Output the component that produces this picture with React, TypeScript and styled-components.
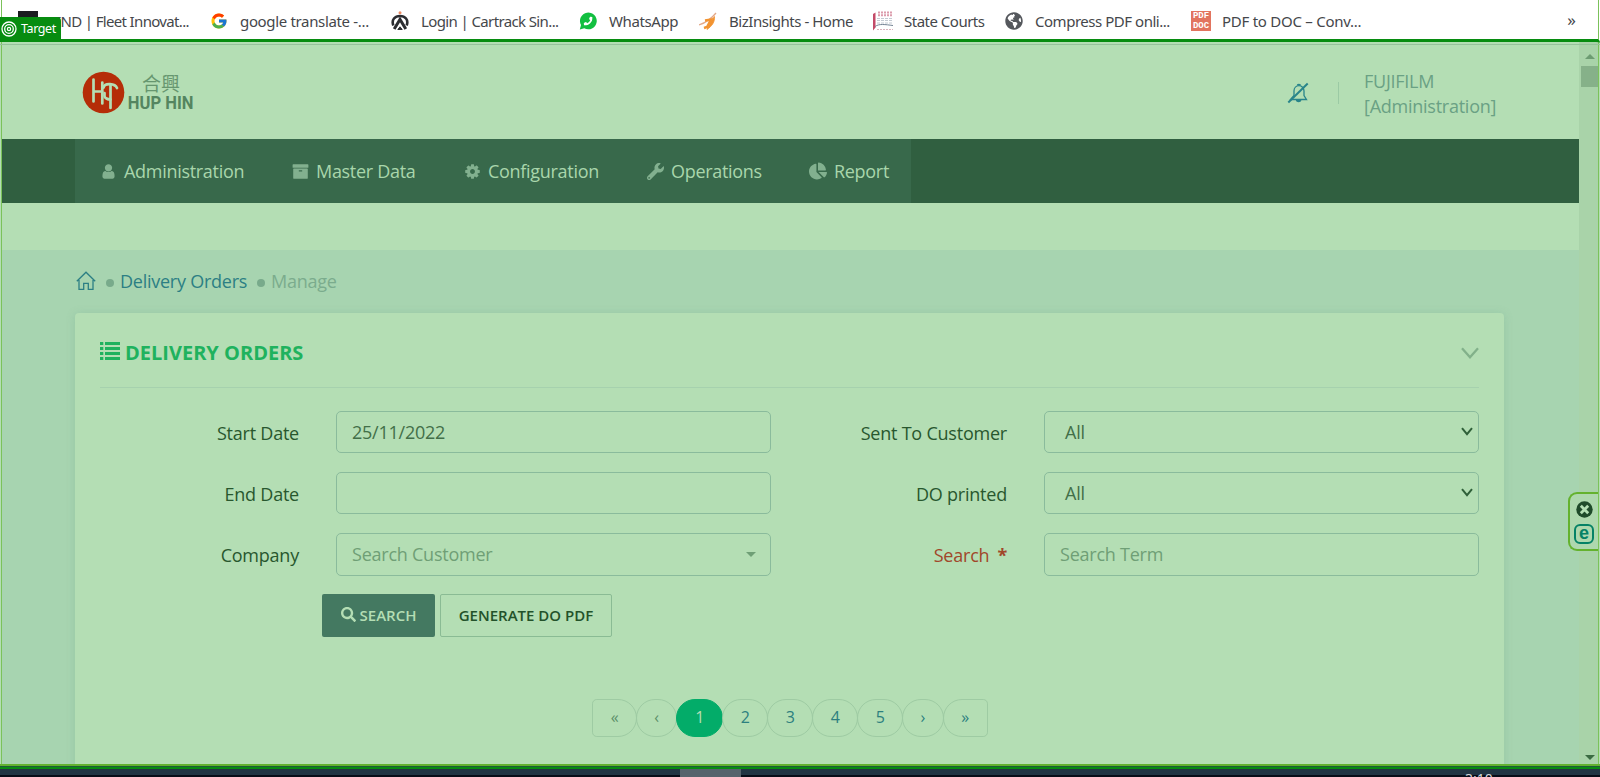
import React from "react";
import styled, { createGlobalStyle, css } from "styled-components";
import { FcGoogle } from "react-icons/fc";
import { FaWrench, FaChartPie, FaSearch, FaPhoneAlt, FaGlobeAmericas } from "react-icons/fa";

const GlobalStyle = createGlobalStyle`
  *, *::before, *::after { box-sizing: border-box; }
  body { margin: 0; background: #fff; }
`;

const uiFont = `"Noto Sans", "Open Sans", sans-serif`;

const Screen = styled.div`
  position: relative;
  width: 1600px;
  height: 777px;
  overflow: hidden;
  display: flex;
  flex-direction: column;
  background: #fff;
  font-family: "Open Sans", sans-serif;
  font-size: 18px;
`;

/* Browser bookmarks */
const BookmarkBar = styled.div`
  display: flex;
  align-items: center;
  height: 39px;
  flex: none;
  padding: 3px 24px 0 18px;
  font-family: ${uiFont};
  font-size: 15px;
  color: #45474b;
`;
const Bookmark = styled.div<{ $w: number; $ls: number }>`
  display: flex;
  align-items: center;
  gap: 11px;
  flex: none;
  width: ${(p) => p.$w}px;
  white-space: nowrap;
  letter-spacing: ${(p) => p.$ls}px;
  svg { display: block; flex: none; }
`;
const BookmarkText = styled.span`
  padding-bottom: 1px;
`;
const IconBox = styled.span`
  display: flex;
  justify-content: center;
  flex: none;
  width: 20px;
`;
const Overflow = styled.span`
  margin-left: auto;
  font-size: 17px;
  line-height: 18px;
  padding-bottom: 3px;
`;
const BlackTile = styled.span`
  width: 20px;
  height: 20px;
  background: #1b1c20;
`;
const PdfTile = styled.span`
  display: flex;
  flex-direction: column;
  align-items: center;
  width: 20px;
  height: 20px;
  background: #e2745f;
  color: #fff;
  font: bold 9px/10px "Liberation Mono", monospace;
  letter-spacing: 0;
`;

/* Captured window */
const Viewport = styled.div`
  display: flex;
  height: 727px;
  margin: 0 2px 0 2px;
  border-top: 3px solid #078c10;
  flex: none;
`;
const Page = styled.div`
  width: 1577px;
  display: flex;
  flex-direction: column;
  background: #a7d4b0;
  overflow: hidden;
`;
const Header = styled.header`
  display: flex;
  align-items: center;
  height: 97px;
  flex: none;
  padding: 4px 83px 0 80px;
  background: #b4deb4;
`;
const BrandText = styled.div`
  display: flex;
  flex-direction: column;
  align-items: center;
  width: 66px;
  margin-left: 3px;
`;
const BrandCjk = styled.span`
  font: 400 19px/20px "Noto Sans CJK TC", sans-serif;
  color: #66966f;
`;
const BrandLatin = styled.span`
  font: bold 18px/20px Roboto, sans-serif;
  white-space: nowrap;
  color: #548560;
  transform: scaleX(0.92);
`;
const HeaderTools = styled.div`
  display: flex;
  align-items: center;
  margin-left: auto;
`;
const ToolDivider = styled.span`
  width: 1px;
  height: 22px;
  margin: 0 25px 0 29px;
  background: #9bcaa4;
`;
const UserName = styled.div`
  width: 132px;
  padding-top: 2px;
  line-height: 25px;
  color: #6aa184;
  white-space: nowrap;
  letter-spacing: -0.25px;
`;

const NavBar = styled.nav`
  display: flex;
  height: 64px;
  flex: none;
  padding-left: 73px;
  background: #305f40;
`;
const Menu = styled.div`
  display: flex;
  width: 836px;
  background: #38694b;
`;
const MenuItem = styled.div<{ $w: number }>`
  display: flex;
  align-items: center;
  gap: 7px;
  width: ${(p) => p.$w}px;
  padding-left: 25px;
  flex: none;
  color: #a9d6ab;
  white-space: nowrap;
  letter-spacing: -0.3px;
  svg { color: #82b08f; flex: none; }
`;
const SubHeader = styled.div`
  height: 47px;
  flex: none;
  background: #b4deb4;
`;
const Breadcrumb = styled.div`
  display: flex;
  align-items: center;
  height: 63px;
  flex: none;
  padding: 0 0 2px 74px;
  letter-spacing: -0.25px;
`;
const Dot = styled.span`
  width: 8px;
  height: 8px;
  margin: 5px 6px 0 10px;
  border-radius: 50%;
  background: #78aa8b;
`;
const Crumb = styled.span<{ $active?: boolean }>`
  color: ${(p) => (p.$active ? "#7bac8d" : "#2c7f84")};
`;

const Card = styled.section`
  width: 1429px;
  height: 470px;
  flex: none;
  margin-left: 73px;
  padding: 0 25px;
  border-radius: 4px;
  background: #b4deb4;
  box-shadow: 0 1px 8px rgba(110, 170, 140, 0.3);
`;
const CardHeader = styled.div`
  display: flex;
  align-items: center;
  gap: 5px;
  height: 75px;
  padding-top: 5px;
  border-bottom: 1px solid #a6d1ae;
`;
const CardTitle = styled.h1`
  margin: 0 auto 0 0;
  font-size: 20px;
  font-weight: 700;
  color: #1fb25e;
`;
const FormGrid = styled.div`
  display: grid;
  grid-template-columns: 199px 435px 199px 435px;
  grid-template-rows: 42px 42px 43px;
  column-gap: 37px;
  row-gap: 19px;
  padding-top: 23px;
`;
const Label = styled.label<{ $required?: boolean }>`
  display: flex;
  align-items: center;
  justify-content: flex-end;
  gap: 8px;
  padding-top: 1px;
  color: ${(p) => (p.$required ? "#a1472a" : "#28572e")};
  letter-spacing: -0.22px;
`;
const Field = styled.div<{ $select?: boolean; $muted?: boolean }>`
  display: flex;
  align-items: center;
  justify-content: space-between;
  border: 1px solid #8abb9c;
  border-radius: 5px;
  padding: 0 ${(p) => (p.$select ? 5 : 14)}px 1px ${(p) => (p.$select ? 20 : 15)}px;
  color: ${(p) => (p.$muted ? "#6f9f76" : "#426f48")};
  letter-spacing: -0.24px;
`;
const Actions = styled.div`
  display: flex;
  gap: 5px;
  padding: 18px 0 0 222px;
`;
const Button = styled.button<{ $primary?: boolean }>`
  display: flex;
  align-items: center;
  justify-content: center;
  gap: 4px;
  height: 43px;
  width: ${(p) => (p.$primary ? 113 : 172)}px;
  padding: 0 0 2px;
  border-radius: 2px;
  font: 600 15px "Open Sans", sans-serif;
  white-space: nowrap;
  ${(p) =>
    p.$primary
      ? css`border: 0; background: #447961; color: #b4deb4;`
      : css`border: 1px solid #8abb94; background: none; color: #23522a;`}
`;
const Pagination = styled.div`
  display: flex;
  justify-content: center;
  margin-top: 62px;
`;
const PageLink = styled.span<{ $w: number; $kind?: "first" | "last" | "active" | "muted" }>`
  display: flex;
  align-items: center;
  justify-content: center;
  width: ${(p) => p.$w}px;
  height: 38px;
  flex: none;
  padding-bottom: 2px;
  margin-right: -1px;
  font-size: 16px;
  border: 1px solid ${(p) => (p.$kind === "active" ? "#03ac69" : "#9ecba3")};
  border-radius: ${(p) =>
    p.$kind === "first" ? "5px 20px 20px 5px" : p.$kind === "last" ? "20px 5px 5px 20px" : "20px"};
  background: ${(p) => (p.$kind === "active" ? "#03ac69" : "transparent")};
  color: ${(p) =>
    p.$kind === "active" ? "#b4deb4" : p.$kind === "first" || p.$kind === "muted" ? "#5c9069" : "#2c7f7f"};
`;

const Scrollbar = styled.div`
  display: flex;
  flex-direction: column;
  align-items: center;
  width: 19px;
  padding: 12px 0 6px 2px;
  background: #a9d3a9;
`;
const Thumb = styled.div`
  width: 17px;
  height: 21px;
  margin: 7px 0 auto;
  background: #86b189;
`;

const Taskbar = styled.div`
  height: 11px;
  flex: none;
  background: linear-gradient(#1e3d40 0 3px, #213543 3px 9px, #070d18 9px);
  display: flex;
  padding-left: 680px;
`;
const TaskActive = styled.div`
  width: 61px;
  background: #56636c;
`;
const Clock = styled.div`
  margin-left: 724px;
  padding-top: 6px;
  height: 11px;
  overflow: hidden;
  font: 14px/14px ${uiFont};
  color: #d0d5da;
`;

/* Capture frame drawn above the window */
const FrameTop = styled.div`
  position: absolute;
  left: 0;
  top: 39px;
  width: 1600px;
  height: 6px;
  border-top: 3px solid #078c10;
  border-bottom: 1px solid #96c19b;
  border-top-right-radius: 4px;
`;
const FrameSide = styled.div<{ $right?: boolean }>`
  position: absolute;
  top: 0;
  ${(p) => (p.$right ? "right: 1px;" : "left: 1px;")}
  width: 1px;
  height: 766px;
  background: #7bc25a;
`;
const FrameEdge = styled.div<{ $right?: boolean }>`
  position: absolute;
  top: 42px;
  ${(p) => (p.$right ? "right: 0;" : "left: 0;")}
  width: 1px;
  height: 724px;
  background: #b4deb4;
`;
const FrameBottom = styled.div`
  position: absolute;
  left: 0;
  top: 764px;
  width: 1600px;
  height: 5px;
  background: linear-gradient(#62b22f 0 2px, #1d5a38 2px 3px, #078c10 3px);
`;
const TargetBadge = styled.div`
  position: absolute;
  left: 0;
  top: 17px;
  display: flex;
  align-items: center;
  gap: 4px;
  width: 61px;
  height: 23px;
  padding-left: 1px;
  border-top-right-radius: 4px;
  background: #078c10;
  color: #fff;
  font: 12.5px ${uiFont};
  letter-spacing: -0.4px;
`;
const SideWidget = styled.div`
  position: absolute;
  right: 2px;
  top: 492px;
  display: flex;
  flex-direction: column;
  align-items: center;
  gap: 6px;
  width: 30px;
  height: 59px;
  padding: 7px 2px 0 2px;
  border: 2px solid #64b22e;
  border-right: 0;
  border-radius: 9px 0 0 9px;
  background: #aed8ae;
`;
const EBadge = styled.span`
  display: flex;
  align-items: center;
  justify-content: center;
  width: 20px;
  height: 20px;
  padding-bottom: 3px;
  border: 2px solid #068266;
  border-radius: 6px;
  color: #068266;
  font: bold 18px/16px "Liberation Sans", sans-serif;
`;

const FA = ({ d, size = 17 }: { d: string; size?: number }) => (
  <svg width={size} height={size} viewBox="0 0 1792 1792" fill="currentColor"><path d={d} /></svg>
);
const userPath =
  "M1536 1399q0 109-62.5 187t-150.5 78h-854q-88 0-150.5-78t-62.5-187q0-85 8.5-160.5t31.5-152 58.5-131 94-89 134.5-34.5q131 128 313 128t313-128q76 0 134.5 34.5t94 89 58.5 131 31.5 152 8.5 160.5zm-256-887q0 159-112.5 271.5t-271.5 112.5-271.5-112.5-112.5-271.5 112.5-271.5 271.5-112.5 271.5 112.5 112.5 271.5z";
const archivePath =
  "M1088 832q0-26-19-45t-45-19h-256q-26 0-45 19t-19 45 19 45 45 19h256q26 0 45-19t19-45zm576-192v960q0 26-19 45t-45 19h-1408q-26 0-45-19t-19-45v-960q0-26 19-45t45-19h1408q26 0 45 19t19 45zm64-448v256q0 26-19 45t-45 19h-1536q-26 0-45-19t-19-45v-256q0-26 19-45t45-19h1536q26 0 45 19t19 45z";
const cogPath =
  "M1152 896q0-106-75-181t-181-75-181 75-75 181 75 181 181 75 181-75 75-181zm512-109v222q0 12-8 23t-20 13l-185 28q-19 54-39 91 35 50 107 138 10 12 10 25t-9 23q-27 37-99 108t-94 71q-12 0-26-9l-138-108q-44 23-91 38-16 136-29 186-7 28-36 28h-222q-14 0-24.5-8.5t-11.5-21.5l-28-184q-49-16-90-37l-141 107q-10 9-25 9-14 0-25-11-126-114-165-168-7-10-7-23 0-12 8-23 15-21 51-66.5t54-70.5q-27-50-41-99l-183-27q-13-2-21-12.5t-8-23.5v-222q0-12 8-23t19-13l186-28q14-46 39-92-40-57-107-138-10-12-10-24 0-10 9-23 26-36 98.5-107.5t94.5-71.5q13 0 26 10l138 107q44-23 91-38 16-136 29-186 7-28 36-28h222q14 0 24.5 8.5t11.5 21.5l28 184q49 16 90 37l142-107q9-9 24-9 13 0 25 10 129 119 165 170 7 8 7 22 0 12-8 23-15 21-51 66.5t-54 70.5q26 50 41 98l183 28q13 2 21 12.5t8 23.5z";

const BrandMark = () => (
  <svg width="43" height="43" viewBox="0 0 43 43" style={{ display: "block" }}>
    <circle cx="21.5" cy="21.5" r="20.8" fill="#b52d08" />
    <g fill="none" stroke="#b4deb4" strokeWidth="2.7" strokeLinecap="round">
      <path d="M11.500 8.500v22M20.300 11.500v21M11.500 20.500h9M28.500 14v23" />
      <path d="M35 17c-2-4.500-12-5.500-13.500-.5M22.500 22v3c0 2 3 3.500 6 3.500" />
    </g>
  </svg>
);
const BellOff = () => (
  <svg width="22" height="22" viewBox="0 0 22 22" fill="none" stroke="#28848a" strokeWidth="1.300">
    <path d="M3.500 17.500h16l-2.500-4V9c0-3-2.200-5.300-5-5.300S7 6 7 9v4.500z" />
    <path d="M10.500 3.500c0-1.600 3-1.600 3 0" />
    <path d="M8.800 18h5.600c-.3 3-5.300 3-5.600 0z" fill="#28848a" stroke="none" />
    <path d="M1.300 20.500L20.700 1.500" strokeWidth="2" />
  </svg>
);
const HomeIcon = () => (
  <svg width="20" height="20" viewBox="0 0 20 20" fill="none" stroke="#2c7f84" strokeWidth="1.300">
    <path d="M.8 10.300L10 1.200l9.200 9.100M3 9v9.300h4.700v-6h4.600v6H17V9" />
  </svg>
);
const ListIcon = () => (
  <svg width="20" height="18" viewBox="0 0 20 18" fill="#1fb25e" style={{ marginTop: -3 }}>
    {[0, 5, 10, 15].map((y) => (
      <React.Fragment key={y}>
        <rect x="0" y={y} width="3.300" height="3" />
        <rect x="5" y={y} width="15" height="3" />
      </React.Fragment>
    ))}
  </svg>
);
const Chevron = ({ w, h, color, sw }: { w: number; h: number; color: string; sw: number }) => (
  <svg width={w} height={h} viewBox={`0 0 ${w} ${h}`} fill="none" stroke={color} strokeWidth={sw}>
    <path d={`M1 1.200L${w / 2} ${h - 1.8}L${w - 1} 1.200`} />
  </svg>
);
const Triangle = ({ up, color }: { up?: boolean; color: string }) => (
  <svg width="10" height="5" viewBox="0 0 10 5" fill={color} style={{ display: "block", flex: "none" }}>
    <path d={up ? "M0 5L5 0L10 5z" : "M0 0L5 5L10 0z"} />
  </svg>
);
const CartrackIcon = () => (
  <svg width="18" height="20" viewBox="0 0 18 20" fill="none" stroke="#2b2d31">
    <path d="M2.300 14.500C.2 8.500 4 5 9 5s8.800 3.500 6.700 9.500" strokeWidth="2.600" />
    <path d="M3.200 18L9 8.500l5.800 9.500" strokeWidth="3" />
    <path d="M6.800 18.500L9 15.800l2.200 2.700z" fill="#2b2d31" strokeWidth="1" />
    <circle cx="9" cy="1.800" r="1.500" fill="#ec8a63" stroke="none" />
  </svg>
);
const WhatsAppIcon = () => (
  <svg width="18" height="18" viewBox="0 0 18 18">
    <path d="M.8 17.500L2 13A8.400 8.400 0 1 1 5.300 16.300z" fill="#12bf40" />
    <g transform="translate(13.600 4.600) scale(-1 1)"><FaPhoneAlt size={9} color="#fff" /></g>
  </svg>
);
const BizIcon = () => (
  <svg width="18" height="18" viewBox="0 0 18 18" fill="none" stroke="#f29331">
    <path d="M0 13C6 11 12 7 17 1" strokeWidth="1.300" stroke="#e3a888" />
    <path d="M6 8.500L12 7.500L8 15L5 16" strokeWidth="2.400" />
    <path d="M15.500 4.500C16 10 13 14 8 17.500L12 9z" fill="#f29331" strokeWidth=".8" />
  </svg>
);
const CourtsIcon = () => (
  <svg width="20" height="20" viewBox="0 0 20 20">
    <path d="M0 3l2.500-1.500v15L0 19.500z" fill="#c44a68" />
    <g stroke="#dc9cac" strokeWidth="2"><path d="M5 1.500h15M5 4.200h15" strokeDasharray="2 1" /></g>
    <g stroke="#c3cad2"><path d="M4 7.500h15M4 9.500h15M4 12h15" strokeDasharray="3 1" /></g>
    <path d="M2 15.500c4-3 10-2 18-1" fill="none" stroke="#728293" />
    <path d="M4 18.500h16" stroke="#dbb4be" strokeDasharray="2 1" />
  </svg>
);

const bookmarks: { w: number; ls: number; icon: React.ReactNode; text: string }[] = [
  { w: 191, ls: -0.66, icon: <BlackTile />, text: "FIND | Fleet Innovat..." },
  { w: 181, ls: -0.34, icon: <FcGoogle size={18} />, text: "google translate -..." },
  { w: 188, ls: -0.62, icon: <CartrackIcon />, text: "Login | Cartrack Sin..." },
  { w: 120, ls: -0.4, icon: <WhatsAppIcon />, text: "WhatsApp" },
  { w: 175, ls: -0.47, icon: <BizIcon />, text: "BizInsights - Home" },
  { w: 131, ls: -0.5, icon: <CourtsIcon />, text: "State Courts" },
  { w: 187, ls: -0.47, icon: <FaGlobeAmericas size={18} color="#55585d" />, text: "Compress PDF onli..." },
  { w: 170, ls: -0.26, icon: <PdfTile><span>PDF</span><span>DOC</span></PdfTile>, text: "PDF to DOC – Conv..." },
];

export default function App() {
  return (
    <Screen>
      <GlobalStyle />
      <BookmarkBar>
        {bookmarks.map((b) => (
          <Bookmark key={b.text} $w={b.w} $ls={b.ls}>
            <IconBox>{b.icon}</IconBox>
            <BookmarkText>{b.text}</BookmarkText>
          </Bookmark>
        ))}
        <Overflow>»</Overflow>
      </BookmarkBar>

      <Viewport>
        <Page>
          <Header>
            <BrandMark />
            <BrandText>
              <BrandCjk>合興</BrandCjk>
              <BrandLatin>HUP HIN</BrandLatin>
            </BrandText>
            <HeaderTools>
              <BellOff />
              <ToolDivider />
              <UserName>FUJIFILM<br />[Administration]</UserName>
            </HeaderTools>
          </Header>
          <NavBar>
            <Menu>
              <MenuItem $w={192}><FA d={userPath} />Administration</MenuItem>
              <MenuItem $w={172}><FA d={archivePath} />Master Data</MenuItem>
              <MenuItem $w={183}><FA d={cogPath} />Configuration</MenuItem>
              <MenuItem $w={162}><FaWrench size={17} />Operations</MenuItem>
              <MenuItem $w={127}><FaChartPie size={18} />Report</MenuItem>
            </Menu>
          </NavBar>
          <SubHeader />
          <Breadcrumb>
            <HomeIcon />
            <Dot />
            <Crumb>Delivery Orders</Crumb>
            <Dot />
            <Crumb $active>Manage</Crumb>
          </Breadcrumb>
          <Card>
            <CardHeader>
              <ListIcon />
              <CardTitle>DELIVERY ORDERS</CardTitle>
              <Chevron w={18} h={12} color="#82b18a" sw={2.3} />
            </CardHeader>
            <FormGrid>
              <Label>Start Date</Label>
              <Field>25/11/2022</Field>
              <Label>Sent To Customer</Label>
              <Field $select>All<Chevron w={12} h={9} color="#2f6039" sw={2} /></Field>
              <Label>End Date</Label>
              <Field />
              <Label>DO printed</Label>
              <Field $select>All<Chevron w={12} h={9} color="#2f6039" sw={2} /></Field>
              <Label>Company</Label>
              <Field $muted>Search Customer<Triangle color="#6f9f76" /></Field>
              <Label $required>Search <b>*</b></Label>
              <Field $muted>Search Term</Field>
            </FormGrid>
            <Actions>
              <Button $primary><FaSearch size={15} />SEARCH</Button>
              <Button>GENERATE DO PDF</Button>
            </Actions>
            <Pagination>
              <PageLink $w={45} $kind="first">«</PageLink>
              <PageLink $w={41} $kind="muted">‹</PageLink>
              <PageLink $w={47} $kind="active">1</PageLink>
              <PageLink $w={46}>2</PageLink>
              <PageLink $w={46}>3</PageLink>
              <PageLink $w={46}>4</PageLink>
              <PageLink $w={46}>5</PageLink>
              <PageLink $w={41.5}>›</PageLink>
              <PageLink $w={45} $kind="last">»</PageLink>
            </Pagination>
          </Card>
        </Page>
        <Scrollbar>
          <Triangle up color="#6d9c72" />
          <Thumb />
          <Triangle color="#3b6b42" />
        </Scrollbar>
      </Viewport>
      <Taskbar>
        <TaskActive />
        <Clock>3:10</Clock>
      </Taskbar>

      <FrameEdge />
      <FrameEdge $right />
      <FrameSide />
      <FrameSide $right />
      <FrameTop />
      <FrameBottom />
      <TargetBadge>
        <svg width="16" height="16" viewBox="0 0 16 16" fill="none" stroke="#fff" strokeWidth="1.300">
          <circle cx="8" cy="8" r="7" /><circle cx="8" cy="8" r="4.300" /><circle cx="8" cy="8" r="1.600" />
        </svg>
        Target
      </TargetBadge>
      <SideWidget>
        <svg width="17" height="17" viewBox="0 0 17 17" style={{ display: "block", flex: "none" }}>
          <circle cx="8.500" cy="8.500" r="8.200" fill="#1f4a2a" />
          <path d="M4.800 4.800l7.400 7.400M12.200 4.800l-7.400 7.400" stroke="#b4deb4" strokeWidth="2.800" />
        </svg>
        <EBadge>e</EBadge>
      </SideWidget>
    </Screen>
  );
}
